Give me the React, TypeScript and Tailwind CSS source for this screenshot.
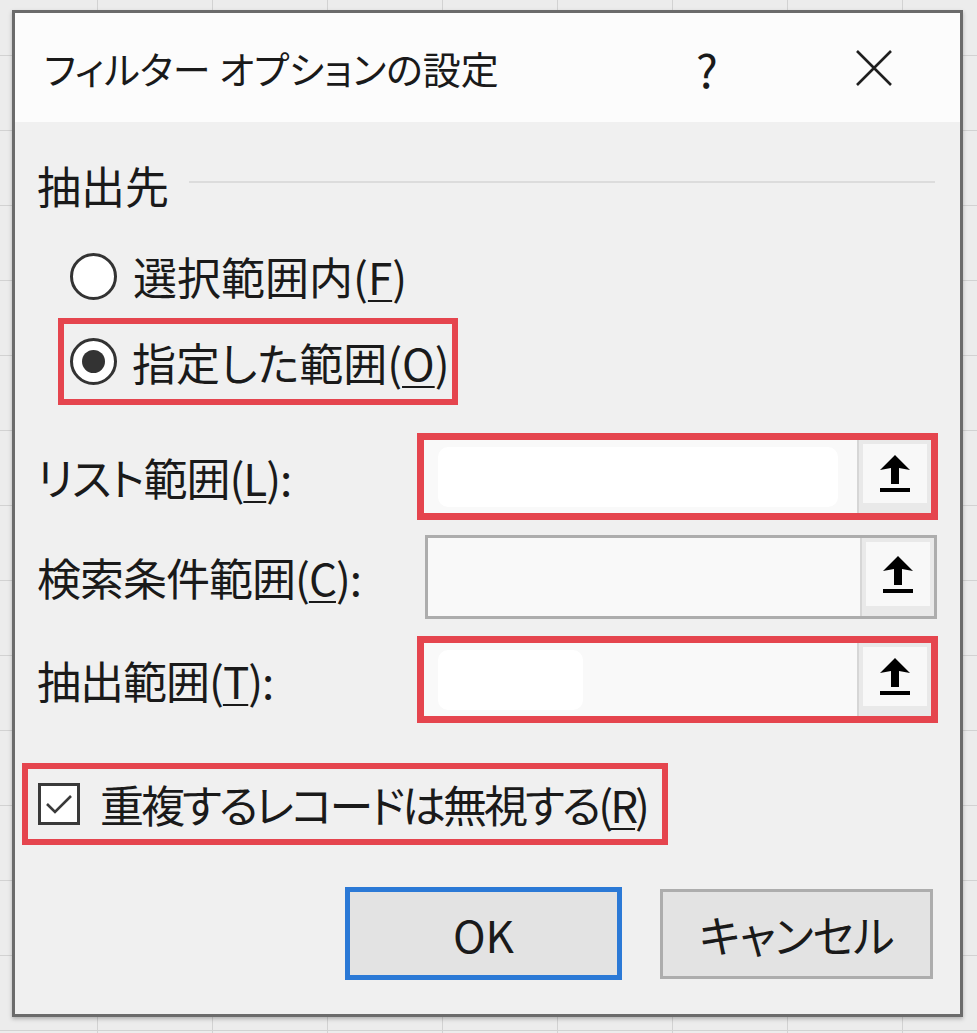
import React from 'react';

const jp = "font-['Noto_Sans_CJK_JP','Noto_Sans_CJK_SC',sans-serif] [font-feature-settings:'palt'] text-[#1a1a1a] whitespace-nowrap";

const Key = ({ children }: { children: React.ReactNode }) => (
  <span className="underline decoration-[2px] underline-offset-[5px]">{children}</span>
);

const PickIcon = () => (
  <svg width="30" height="37" viewBox="0 0 30 37" fill="#000">
    <path d="M15 0 L30 15 L19 13 L19 29 L11 29 L11 13 L0 15 Z" />
    <rect x="0" y="33" width="30" height="4" />
  </svg>
);

const RefButton = () => (
  <div className="w-[74px] h-full shrink-0 bg-[#e9e9e9] border-l-2 border-[#d6d6d6] flex flex-col">
    <div className="flex-1 mx-[4px] mt-[4px] bg-[#f8f8f8] flex items-center justify-center">
      <PickIcon />
    </div>
    <div className="h-[10px]" />
  </div>
);

interface RowProps {
  label: React.ReactNode;
  marked?: boolean;
  patch?: number;
  className?: string;
}

const RangeRow: React.FC<RowProps> = ({ label, marked, patch, className }) => (
  <div className={`flex items-center ${className ?? ''}`}>
    <div className="ml-[22px] flex-1 text-[44px] leading-none tracking-[-1px]">{label}</div>
    {marked ? (
      <div className="w-[521px] h-[87px] border-[7px] border-[#e5454e] bg-[#f9f9f9] flex">
        <div className="flex-1 flex items-center pl-[14px]">
          {patch ? <div className="h-[60px] bg-white rounded-[10px]" style={{ width: patch }} /> : null}
        </div>
        <RefButton />
      </div>
    ) : (
      <div className="w-[512px] h-[84px] mr-[1px] border-[3px] border-[#adadad] bg-[#f9f9f9] flex">
        <div className="flex-1" />
        <RefButton />
      </div>
    )}
  </div>
);

export default function App() {
  return (
    <div className="w-full h-[1033px] overflow-hidden bg-[#ececec] bg-[linear-gradient(to_right,#d2d2d2_1px,transparent_1px),linear-gradient(to_bottom,#d2d2d2_1px,transparent_1px)] bg-[size:115px_75px] bg-[position:-18px_-20px] pt-[10px] pl-[12px]">
      <div className={`w-[951px] h-[1007px] border-[3px] border-[#6b6b6b] bg-[#f0f0f0] flex flex-col shadow-[0_2px_4px_rgba(0,0,0,0.25)] ${jp}`}>
        {/* title bar */}
        <div className="h-[109px] shrink-0 bg-[#fcfcfc] flex items-center pl-[29px]">
          <span className="text-[38px] leading-none">フィルター オプションの設定</span>
          <span className="ml-auto w-[60px] text-center text-[46px] leading-none">?</span>
          <span className="ml-[107px] mr-[56px] w-[60px] flex justify-center">
            <svg width="40" height="40" viewBox="0 0 40 40" stroke="#1f1f1f" strokeWidth="2.6" fill="none">
              <path d="M3 3 L37 37 M37 3 L3 37" />
            </svg>
          </span>
        </div>

        {/* body */}
        <div className="flex-1 flex flex-col">
          <div className="mt-[38px] h-[50px] ml-[22px] mr-[25px] flex items-center">
            <span className="text-[44px] leading-none">抽出先</span>
            <div className="flex-1 ml-[20px] mb-[6px] h-[2px] bg-[#dcdcdc]" />
          </div>

          <div className="mt-[41px] h-[50px] ml-[55px] flex items-center">
            <div className="w-[47px] h-[47px] rounded-full border-[3px] border-[#333] bg-white" />
            <span className="ml-[16px] text-[44px] leading-none">
              選択範囲内(<Key>F</Key>)
            </span>
          </div>

          <div className="mt-[17px] ml-[43px] w-[400px] h-[87px] border-[6px] border-[#e5454e] flex items-center pl-[6px]">
            <div className="w-[47px] h-[47px] rounded-full border-[3px] border-[#333] bg-white flex items-center justify-center">
              <div className="w-[23px] h-[23px] rounded-full bg-[#333]" />
            </div>
            <span className="ml-[15px] text-[44px] leading-none">
              指定した範囲(<Key>O</Key>)
            </span>
          </div>

          <div className="mt-[28px] flex flex-col pr-[22px]">
            <RangeRow label={<>リスト範囲(<Key>L</Key>):</>} marked patch={400} />
            <RangeRow className="mt-[15px]" label={<>検索条件範囲(<Key>C</Key>):</>} />
            <RangeRow className="mt-[17px]" label={<>抽出範囲(<Key>T</Key>):</>} marked patch={145} />
          </div>

          <div className="mt-[40px] ml-[7px] w-[646px] h-[82px] border-[6px] border-[#e5454e] flex items-center pl-[10px]">
            <div className="w-[42px] h-[42px] shrink-0 border-[3px] border-[#3a3a3a] bg-white flex items-center justify-center">
              <svg width="28" height="22" viewBox="0 0 28 22" fill="none" stroke="#3a3a3a" strokeWidth="2.6">
                <path d="M2 11 L10 19 L26 3" />
              </svg>
            </div>
            <span className="ml-[20px] text-[44px] leading-none tracking-[-3px]">
              重複するレコードは無視する(<Key>R</Key>)
            </span>
          </div>

          <div className="mt-[42px] flex justify-end items-start pr-[27px] gap-[38px]">
            <div className="w-[277px] h-[93px] border-[5px] border-[#2b79d6] bg-[#e3e3e3] flex items-center justify-center text-[44px] leading-none">
              OK
            </div>
            <div className="mt-[2px] w-[273px] h-[90px] border-[3px] border-[#adadad] bg-[#e3e3e3] flex items-center justify-center text-[44px] leading-none tracking-[-1px]">
              キャンセル
            </div>
          </div>
        </div>
      </div>
    </div>
  );
}
